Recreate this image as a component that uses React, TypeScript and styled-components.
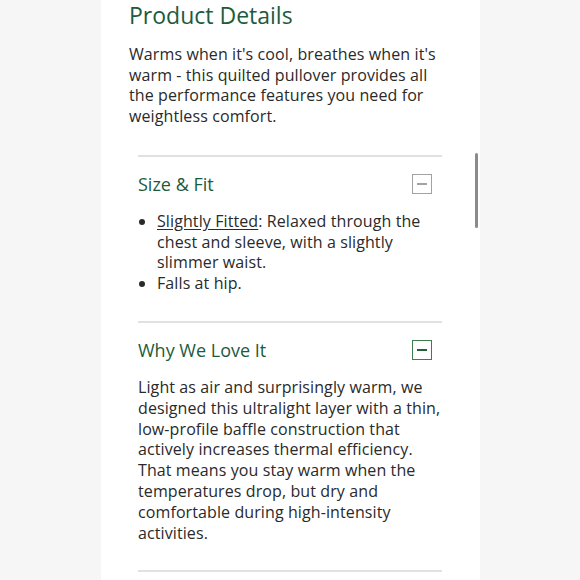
import React from 'react';
import styled, { createGlobalStyle } from 'styled-components';

const GlobalStyle = createGlobalStyle`
  html, body {
    margin: 0;
    padding: 0;
    background: #f7f6f7;
  }
  body {
    font-family: "Open Sans", "Liberation Sans", sans-serif;
  }
`;

const Page = styled.div`
  display: flex;
  justify-content: flex-start;
  height: 580px;
  overflow: hidden;
`;

const Panel = styled.div`
  position: relative;
  margin-left: 101px;
  width: 379px;
  height: 580px;
  background: #ffffff;
  padding: 2px 28px 0 28px;
  box-sizing: border-box;
`;

const Title = styled.h2`
  margin: 0;
  font-size: 23px;
  line-height: 26px;
  font-weight: 500;
  color: #1d5b3c;
`;

const Intro = styled.p`
  margin: 16px 0 0;
  font-size: 16px;
  line-height: 20.7px;
  letter-spacing: 0.1px;
  color: #2a2a2a;
  padding-right: 10px;
`;

const Accordion = styled.div`
  margin: 28px 10px 0 9px;
`;

const Section = styled.section`
  border-top: 2px solid #e1e1e1;
`;

const Header = styled.div`
  display: flex;
  align-items: center;
  justify-content: space-between;
  padding: 17px 10px 17px 0;
`;

const Heading = styled.h3`
  margin: 0;
  font-size: 18px;
  font-weight: 500;
  line-height: 20px;
  color: #1d5b3c;
`;

const Toggle = styled.span<{ $active?: boolean }>`
  display: flex;
  align-items: center;
  justify-content: center;
  width: 20px;
  height: 20px;
  box-sizing: border-box;
  border: 1.5px solid ${p => (p.$active ? '#3d7f4c' : '#a2a2a2')};
  &::after {
    content: '';
    width: 10px;
    height: ${p => (p.$active ? '2.5px' : '1.5px')};
    background: ${p => (p.$active ? '#23603a' : '#a2a2a2')};
  }
`;

const Body = styled.div`
  padding: 0 0 27px;
  font-size: 16px;
  line-height: 20.8px;
  letter-spacing: 0.1px;
  color: #2a2a2a;
`;

const List = styled.ul`
  margin: 0;
  padding: 0 0 0 19px;
  li { padding-left: 0; }
`;

const Underlined = styled.span`
  text-decoration: underline;
  text-underline-offset: 2px;
`;

const Para = styled.p`
  margin: 0;
`;

const Scroll = styled.div`
  position: absolute;
  left: 374px;
  top: 153px;
  width: 3px;
  height: 75px;
  border-radius: 2px;
  background: #8b8b8b;
`;

export default function App() {
  return (
    <Page>
      <GlobalStyle />
      <Panel>
        <Title>Product Details</Title>
        <Intro>
          Warms when it's cool, breathes when it's warm - this quilted pullover provides all
          the performance features you need for weightless comfort.
        </Intro>
        <Accordion>
          <Section>
            <Header>
              <Heading>Size &amp; Fit</Heading>
              <Toggle />
            </Header>
            <Body>
              <List>
                <li>
                  <Underlined>Slightly Fitted</Underlined>: Relaxed through the chest and sleeve,
                  with a slightly slimmer waist.
                </li>
                <li>Falls at hip.</li>
              </List>
            </Body>
          </Section>
          <Section>
            <Header>
              <Heading>Why We Love It</Heading>
              <Toggle $active />
            </Header>
            <Body>
              <Para>
                Light as air and surprisingly warm, we designed this ultralight layer with a thin,
                low-profile baffle construction that actively increases thermal efficiency. That
                means you stay warm when the temperatures drop, but dry and comfortable during
                high-intensity activities.
              </Para>
            </Body>
          </Section>
          <Section />
        </Accordion>
        <Scroll />
      </Panel>
    </Page>
  );
}
